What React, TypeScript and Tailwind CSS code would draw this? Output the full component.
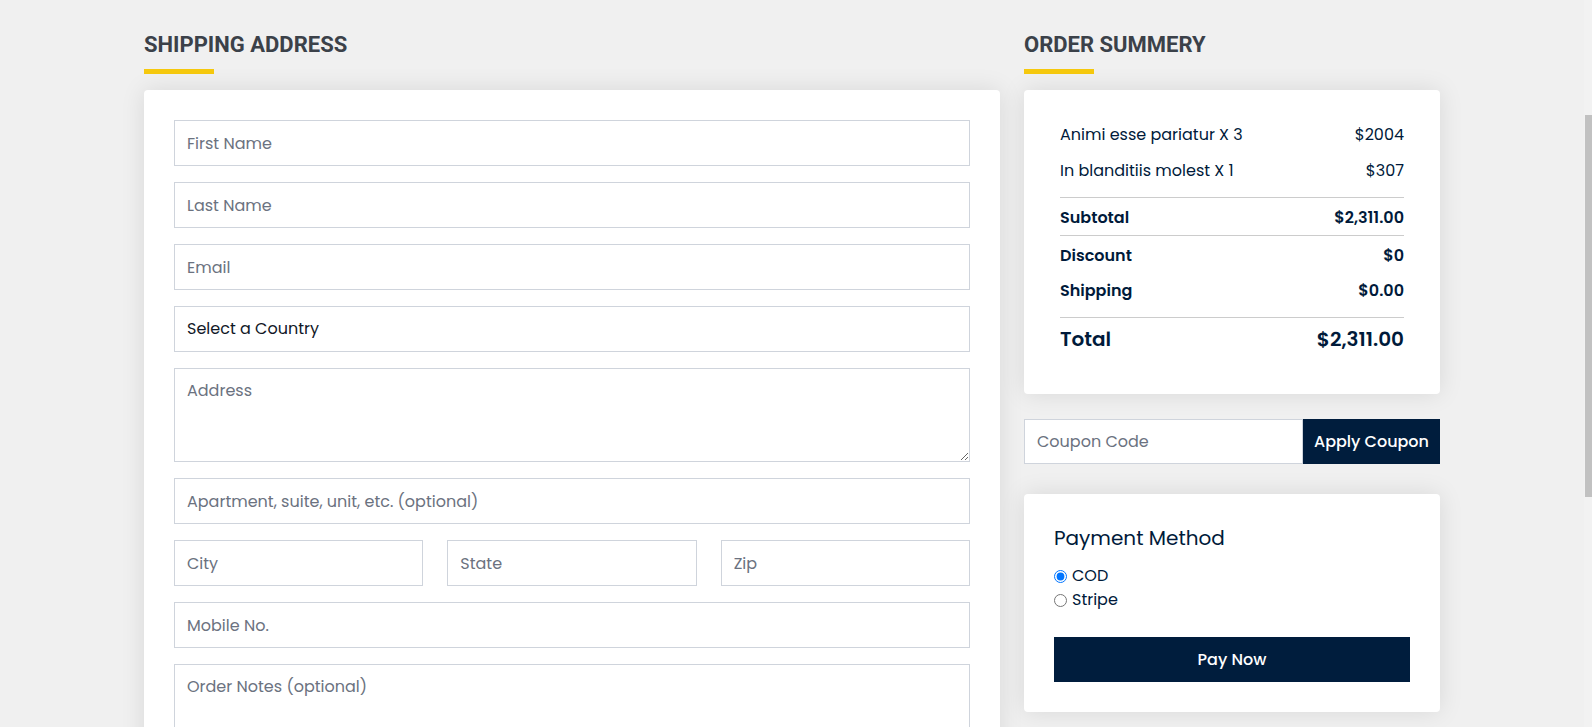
import React from "react"

const body = "font-['Poppins','Open_Sans','Noto_Sans',sans-serif]"

function Field({ placeholder, className = "" }: { placeholder: string; className?: string }) {
  return (
    <input
      placeholder={placeholder}
      className={`h-[46px] w-full border border-[#cfd4dc] bg-white px-3 text-[16px] text-[#111827] placeholder:text-[#6b7280] outline-none ${className}`}
    />
  )
}

function SectionTitle({ children }: { children: React.ReactNode }) {
  return (
    <div>
      <h2 className="font-['Roboto',sans-serif] text-[22px] font-bold leading-none text-[#3b4149]">{children}</h2>
      <div className="mt-[13px] h-[5px] w-[70px] bg-[#f6c90e]" />
    </div>
  )
}

function Row({ label, value, className = "" }: { label: string; value: string; className?: string }) {
  return (
    <div className={`flex items-center justify-between ${className}`}>
      <span>{label}</span>
      <span>{value}</span>
    </div>
  )
}

export default function App() {
  return (
    <div className={`flex h-[727px] overflow-hidden bg-[#f0f0f0] ${body}`}>
      <div className="flex-1 overflow-hidden">
        <div className="mx-auto flex w-[1296px] items-start gap-6 pt-[34px]">
          {/* shipping */}
          <div className="w-[856px]">
            <SectionTitle>SHIPPING ADDRESS</SectionTitle>
            <form className="mt-4 flex flex-col gap-4 rounded bg-white p-[30px] shadow-[0_0_25px_rgba(0,0,0,0.1)]">
              <Field placeholder="First Name" />
              <Field placeholder="Last Name" />
              <Field placeholder="Email" />
              <select className="h-[46px] w-full appearance-none border border-[#cfd4dc] bg-white px-3 text-[16px] text-[#111827] outline-none">
                <option>Select a Country</option>
              </select>
              <textarea
                placeholder="Address"
                className="h-[94px] w-full border border-[#cfd4dc] px-3 py-[10px] text-[16px] placeholder:text-[#6b7280] outline-none"
              />
              <Field placeholder="Apartment, suite, unit, etc. (optional)" />
              <div className="grid grid-cols-3 gap-6">
                <Field placeholder="City" />
                <Field placeholder="State" />
                <Field placeholder="Zip" />
              </div>
              <Field placeholder="Mobile No." />
              <textarea
                placeholder="Order Notes (optional)"
                className="h-[94px] w-full border border-[#cfd4dc] px-3 py-[10px] text-[16px] placeholder:text-[#6b7280] outline-none"
              />
            </form>
          </div>

          {/* summary */}
          <div className="w-[416px]">
            <SectionTitle>ORDER SUMMERY</SectionTitle>
            <div className="mt-4 rounded bg-white px-9 pt-[27px] pb-[34px] text-[16px] text-[#001a3a] shadow-[0_0_25px_rgba(0,0,0,0.1)]">
              <Row label="Animi esse pariatur X 3" value="$2004" className="h-9" />
              <Row label="In blanditiis molest X 1" value="$307" className="h-9" />
              <div className="mt-2 border-t border-[#cccccc]" />
              <Row label="Subtotal" value="$2,311.00" className="h-[37px] pt-[2px] font-semibold" />
              <div className="border-t border-[#cccccc]" />
              <Row label="Discount" value="$0" className="h-10 font-semibold" />
              <Row label="Shipping" value="$0.00" className="h-[30px] font-semibold" />
              <div className="mt-[11px] border-t border-[#cccccc]" />
              <Row label="Total" value="$2,311.00" className="h-[42px] text-[20px] font-semibold" />
            </div>

            <div className="mt-[25px] flex h-[45px]">
              <input
                placeholder="Coupon Code"
                className="h-full min-w-0 flex-1 border border-[#cfd4dc] bg-white px-3 text-[16px] placeholder:text-[#6b7280] outline-none"
              />
              <button className="h-full w-[137px] bg-[#001d3d] text-[16px] font-medium text-white">Apply Coupon</button>
            </div>

            <div className="mt-[30px] rounded bg-white p-[30px] text-[#001a3a] shadow-[0_0_25px_rgba(0,0,0,0.1)]">
              <h3 className="text-[20px] leading-7">Payment Method</h3>
              <div className="mt-[12px] flex flex-col text-[16px]">
                <label className="flex h-6 items-center gap-[5px]">
                  <input type="radio" name="pay" defaultChecked className="m-0 h-[13px] w-[13px]" />
                  COD
                </label>
                <label className="flex h-6 items-center gap-[5px]">
                  <input type="radio" name="pay" className="m-0 h-[13px] w-[13px]" />
                  Stripe
                </label>
              </div>
              <button className="mt-[25px] h-[45px] w-full bg-[#001d3d] text-[16px] font-medium text-white">Pay Now</button>
            </div>
          </div>
        </div>
      </div>

      {/* scrollbar */}
      <div className="flex w-[8px] flex-col bg-[#f2f2f2] pt-[115px] pl-[1px]">
        <div className="h-[382px] bg-[#c1c1c1]" />
      </div>
    </div>
  )
}
